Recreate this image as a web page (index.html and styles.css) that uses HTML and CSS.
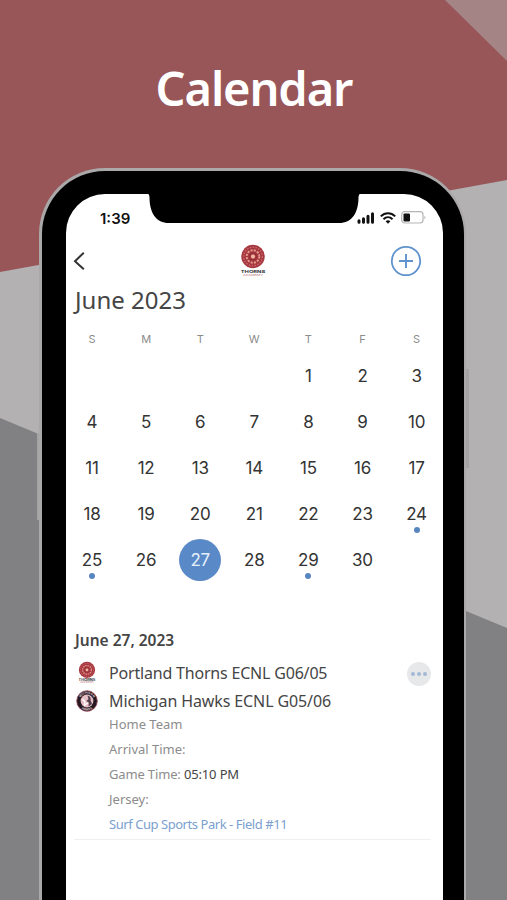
FILE: index.html
```html
<!DOCTYPE html>
<html lang="en">
  <head>
    <meta charset="utf-8" />
    <title>Calendar</title>
    <link rel="stylesheet" href="styles.css" />
  </head>
  <body>
    <svg class="backdrop" viewBox="0 0 507 900" aria-hidden="true">
      <rect width="507" height="900" fill="#985659" />
      <path d="M445 0H507V61Z" fill="#a58486" />
      <path d="M0 272L507 180V900H0Z" fill="#b3b1b2" />
      <path d="M0 418L507 628V900H0Z" fill="#818183" />
    </svg>

    <h1 class="title">Calendar</h1>

    <div class="phone">
      <i class="side side-left"></i>
      <i class="side side-right"></i>
      <div class="screen">
        <svg class="notch" viewBox="0 0 216 30" aria-hidden="true">
          <path d="M0 0H216Q213 0 212.500 4C212.500 20 206 30 193 30H23C10 30 3.500 20 3.500 4Q3 0 0 0Z" />
        </svg>
        <div class="status">
          <span class="clock">1:39</span>
          <div class="indicators">
            <svg width="18" height="12" viewBox="0 0 18 12">
              <path d="M2 8.800V10.200M6.500 6.800V10.200M11 4.300V10.200M15.500 1.700V10.200" stroke="#111" stroke-width="3" stroke-linecap="round" />
            </svg>
            <svg width="16" height="12" viewBox="0 0 16 12" fill="none" stroke="#111" stroke-width="2">
              <path d="M.8 4.400C4.900.3 11.100.3 15.200 4.400M3.500 7.200C6.100 4.700 9.900 4.700 12.500 7.200" />
              <path d="M5.600 9.200Q8 7.200 10.400 9.200L8 11.700Z" fill="#111" stroke="none" />
            </svg>
            <svg width="25" height="13" viewBox="0 0 25 13">
              <rect x=".7" y=".7" width="21.300" height="11.300" rx="3" fill="#fff" stroke="#b5b5b5" stroke-width="1.200" />
              <rect x="2.500" y="2.400" width="6.500" height="8" rx="1.200" fill="#111" />
              <path d="M23.400 4.400Q25.400 6.400 23.400 8.400Z" fill="#b5b5b5" />
            </svg>
          </div>
        </div>

        <div class="navbar">
          <svg class="back" width="13" height="20" viewBox="0 0 13 20">
            <path d="M10.800 1.700L2 10.200L10.800 18.300" fill="none" stroke="#333" stroke-width="2" />
          </svg>
          <svg class="nav-logo" width="26" height="34" viewBox="0 0 26 34">
            <g id="crest">
              <circle cx="13" cy="12.500" r="11.700" fill="#a63840" />
              <circle cx="13" cy="12.500" r="9.400" fill="none" stroke="#cb666a" stroke-width="1.300" stroke-dasharray="1.600 1.300" />
              <circle cx="13" cy="12.500" r="6.300" fill="none" stroke="#e59b8c" stroke-width="1.900" stroke-dasharray="2.100 1.200" />
              <circle cx="13" cy="12.500" r="3.400" fill="#b8434a" stroke="#7c2430" stroke-width=".8" />
              <circle cx="13" cy="12.500" r="2" fill="#f0b7a0" />
            </g>
            <text x=".8" y="28.700" textLength="24.400" lengthAdjust="spacingAndGlyphs" class="crest-name">THORNS</text>
            <text x="3" y="32" textLength="20" lengthAdjust="spacingAndGlyphs" class="crest-sub">ACADEMY</text>
          </svg>
          <svg class="add" width="32" height="32" viewBox="0 0 32 32" fill="none" stroke="#5f93cd">
            <circle cx="16" cy="16" r="14.200" stroke-width="1.800" />
            <path d="M16 9V23M9 16H23" stroke-width="1.900" />
          </svg>
        </div>

        <h2 class="month">June 2023</h2>

        <div class="week">
          <span>S</span><span>M</span><span>T</span><span>W</span><span>T</span><span>F</span><span>S</span>
        </div>
        <div class="days">
          <span class="first">1</span><span>2</span><span>3</span>
          <span>4</span><span>5</span><span>6</span><span>7</span><span>8</span><span>9</span><span>10</span>
          <span>11</span><span>12</span><span>13</span><span>14</span><span>15</span><span>16</span><span>17</span>
          <span>18</span><span>19</span><span>20</span><span>21</span><span>22</span><span>23</span><span class="event">24</span>
          <span class="event">25</span><span>26</span><span class="selected">27</span><span>28</span><span class="event">29</span><span>30</span>
        </div>

        <div class="agenda">
          <h3 class="agenda-date">June 27, 2023</h3>
          <div class="match">
            <div class="crests">
              <svg width="18" height="24" viewBox="0 0 26 34">
                <use href="#crest" />
                <text x=".8" y="28.700" textLength="24.400" lengthAdjust="spacingAndGlyphs" class="crest-name">THORNS</text>
                <text x="3" y="32" textLength="20" lengthAdjust="spacingAndGlyphs" class="crest-sub">ACADEMY</text>
              </svg>
              <svg width="22" height="22" viewBox="0 0 22 22">
                <circle cx="11" cy="11" r="10.300" fill="#251820" stroke="#9b4b59" stroke-width=".8" />
                <circle cx="11" cy="11" r="6.400" fill="#e6bfc6" />
                <path d="M11.500 5.500Q15.500 6.500 14.500 10L16 14L12.500 16.500L12.800 12.500L10.300 11L12.500 9Z" fill="#54404b" />
                <path d="M6.500 9L9 12L8.500 15L12 13" fill="none" stroke="#fff" stroke-width="1.200" />
                <path id="arcTop" d="M3.700 11A7.300 7.300 0 0 1 18.300 11" fill="none" />
                <path id="arcBottom" d="M1.600 11A9.400 9.400 0 0 0 20.400 11" fill="none" />
                <text class="badge-text"><textPath href="#arcTop" startOffset="50%">MICHIGAN</textPath></text>
                <text class="badge-text"><textPath href="#arcBottom" startOffset="50%">HAWKS</textPath></text>
              </svg>
            </div>
            <div class="info">
              <p class="team home">Portland Thorns ECNL G06/05</p>
              <p class="team away">Michigan Hawks ECNL G05/06</p>
              <p class="line first-line">Home Team</p>
              <p class="line">Arrival Time:</p>
              <p class="line game">Game Time: <b>05:10 PM</b></p>
              <p class="line">Jersey:</p>
              <p class="line place">Surf Cup Sports Park - Field #11</p>
            </div>
            <div class="more"><i></i><i></i><i></i></div>
          </div>
        </div>
      </div>
    </div>
  </body>
</html>
```

FILE: styles.css
```css
* {
  box-sizing: border-box;
}

body {
  margin: 0;
  width: 507px;
  height: 900px;
  overflow: hidden;
  position: relative;
  background: #985659;
  font-family: "Noto Sans", sans-serif;
  color: #454545;
}

svg {
  display: block;
  flex: none;
}

h1, h2, h3, p {
  margin: 0;
}

.backdrop {
  position: absolute;
  top: 0;
  left: 0;
  width: 507px;
  height: 900px;
}

.title {
  position: relative;
  height: 168px;
  padding: 54px 0 0 1px;
  text-align: center;
  font-size: 47px;
  line-height: 68px;
  font-weight: 600;
  letter-spacing: -1.100px;
  color: #fff;
}

/* device */
.phone {
  position: relative;
  width: 427px;
  height: 732px;
  margin-left: 39px;
  padding: 23px 21px 0 24px;
  background: #000;
  border: 3px solid #aaa8a8;
  border-right-width: 2px;
  border-bottom: 0;
  border-radius: 66px 66px 0 0;
}

.side {
  position: absolute;
  width: 2px;
  background: #a5a4a5;
}

.side-left {
  left: -5px;
  top: 262px;
  height: 87px;
}

.side-right {
  right: -5px;
  width: 3px;
  top: 198px;
  height: 99px;
}

.screen {
  position: relative;
  width: 377px;
  height: 706px;
  background: #fff;
  border-radius: 39px 39px 0 0;
}

.notch {
  position: absolute;
  top: -1px;
  left: 80px;
  width: 216px;
  height: 30px;
}

.status {
  display: flex;
  justify-content: space-between;
  height: 46px;
  padding: 15px 17px 0 34px;
}

.clock {
  font: 600 15px/19px Inter, sans-serif;
  color: #111;
}

.indicators {
  display: flex;
  align-items: center;
  gap: 5px;
  height: 17px;
}

.navbar {
  display: flex;
  align-items: center;
  justify-content: space-between;
  height: 42px;
  padding: 0 21px 0 7px;
}

.nav-logo {
  margin-left: 30px;
}

.crest-name {
  font: 700 4px Inter, sans-serif;
  fill: #303035;
}

.crest-sub {
  font: 400 2.700px Inter, sans-serif;
  fill: #b46f73;
}

.month {
  padding: 2px 0 0 9px;
  font-size: 24px;
  line-height: 32px;
  font-weight: 400;
}

.week,
.days {
  display: grid;
  grid-template-columns: repeat(7, 44px);
  column-gap: 10.100px;
  padding-left: 4px;
  text-align: center;
  font-family: Inter, sans-serif;
}

.week {
  padding-top: 13px;
  font-size: 11px;
  line-height: 20px;
  color: #8b8b8b;
}

.days {
  padding-top: 3.500px;
  grid-auto-rows: 46px;
  font-size: 17px;
  line-height: 46px;
  letter-spacing: -0.200px;
  color: #333;
}

.days .first {
  grid-column: 5;
}

.event {
  position: relative;
}

.event::after {
  content: "";
  position: absolute;
  left: 19px;
  top: 36px;
  width: 6px;
  height: 6px;
  border-radius: 50%;
  background: #5886bf;
}

.selected {
  width: 42px;
  height: 42px;
  margin: 2px 1px;
  line-height: 42px;
  border-radius: 50%;
  background: #5989c6;
  color: #e6f0fb;
}

.agenda {
  padding: 45.500px 12px 0 8px;
}

.agenda-date {
  padding-left: 1px;
  font-size: 15.500px;
  line-height: 24px;
  font-weight: 600;
}

.match {
  display: flex;
  height: 188px;
  border-bottom: 1px solid #f0f0f0;
}

.crests {
  display: flex;
  flex-direction: column;
  align-items: center;
  gap: 5px;
  width: 24px;
  padding: 9px 0 0 1px;
}

.badge-text {
  font: 700 3px Inter, sans-serif;
  fill: #d9c7cc;
  text-anchor: middle;
}

.info {
  flex: 1;
  padding: 7px 0 0 11px;
  white-space: nowrap;
}

.team {
  font-size: 16px;
  line-height: 28px;
}

.home {
  letter-spacing: -0.190px;
}

.away {
  letter-spacing: -0.110px;
}

.line {
  font-size: 13px;
  line-height: 25px;
  color: #8c8c8c;
}

.first-line {
  margin-top: -3px;
}

.game {
  letter-spacing: -0.150px;
}

.line b {
  font-weight: 400;
  color: #444;
}

.place {
  letter-spacing: -0.450px;
  color: #7ba0cf;
}

.more {
  display: flex;
  align-items: center;
  justify-content: center;
  gap: 2px;
  width: 24px;
  height: 24px;
  margin-top: 10px;
  border-radius: 50%;
  background: #e6e8e9;
}

.more i {
  width: 4px;
  height: 4px;
  border-radius: 50%;
  background: #a3b9d5;
}
```
